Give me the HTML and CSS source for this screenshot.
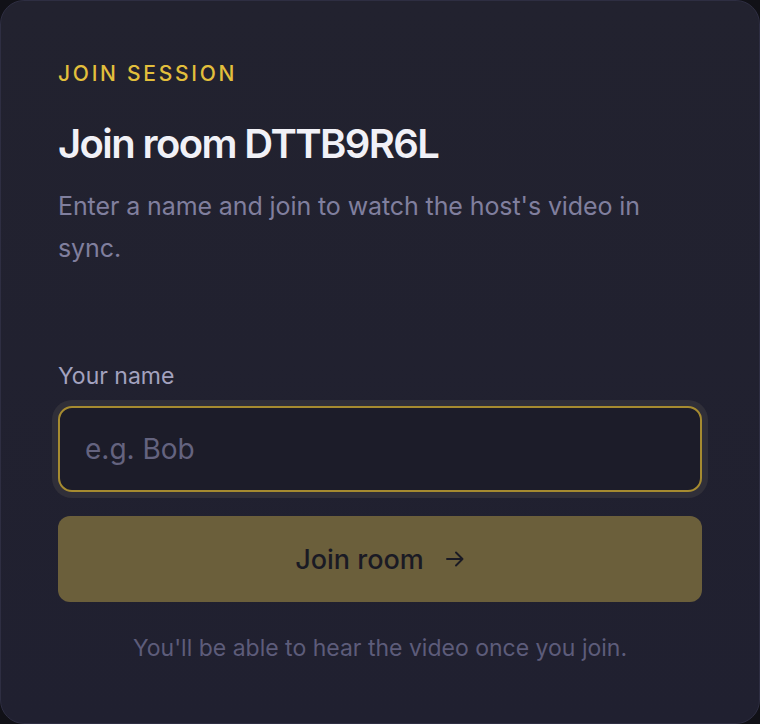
FILE: index.html
```html
<!DOCTYPE html>
<html lang="en">
<head>
<meta charset="utf-8">
<title>Join room</title>
<link rel="stylesheet" href="styles.css">
</head>
<body>
<main class="card">
  <p class="eyebrow">JOIN SESSION</p>
  <h1 class="title">Join room DTTB9R6L</h1>
  <p class="lead">Enter a name and join to watch the host's video in sync.</p>
  <form class="form">
    <label class="label" for="name">Your name</label>
    <div class="field">
      <input class="input" id="name" type="text" placeholder="e.g. Bob">
    </div>
    <button class="btn" type="button" disabled>
      <span>Join room</span>
      <svg class="arrow" viewBox="0 0 20 20" width="20" height="20" aria-hidden="true"><path d="M2 10h15.5M11 3.5l6.5 6.5-6.5 6.5" fill="none" stroke="currentColor" stroke-width="1.9" stroke-linecap="round" stroke-linejoin="round"/></svg>
    </button>
  </form>
  <p class="note">You'll be able to hear the video once you join.</p>
</main>
</body>
</html>
```
FILE: styles.css
```css
* { box-sizing: border-box; }
html, body { margin: 0; padding: 0; }
body {
  background: #111117;
  font-family: Inter, "Noto Sans", sans-serif;
  width: 760px;
  height: 724px;
}
.card {
  width: 760px;
  height: 724px;
  border: 1px solid #2e2e42;
  border-radius: 24px;
  background: linear-gradient(180deg, #22222f 0%, #202030 100%);
  padding: 58px 57px 0 57px;
  display: flex;
  flex-direction: column;
}
.eyebrow {
  margin: 0;
  color: #e2bf3c;
  font-size: 21px;
  font-weight: 500;
  letter-spacing: 0.13em;
  line-height: 30px;
}
.title {
  margin: 29px 0 0;
  color: #f1f1f7;
  font-size: 40px;
  font-weight: 600;
  letter-spacing: -1.6px;
  line-height: 52px;
}
.lead {
  margin: 15px 0 0;
  color: #807f9e;
  font-size: 25px;
  line-height: 42px;
  letter-spacing: -0.1px;
}
.form {
  margin-top: 91px;
  display: flex;
  flex-direction: column;
}
.label {
  color: #a3a2bf;
  font-size: 23px;
  line-height: 32px;
}
.field {
  margin-top: 14px;
}
.input {
  display: block;
  width: 100%;
  height: 86px;
  border: 2px solid #a68b30;
  border-radius: 14px;
  background: #1c1c29;
  box-shadow: 0 0 0 6px #302f39;
  color: #e6e6f0;
  font-family: inherit;
  font-size: 28px;
  padding: 0 25px;
  outline: none;
}
.input::placeholder { color: #64637f; }
.btn {
  margin-top: 24px;
  height: 86px;
  width: 100%;
  border: 0;
  border-radius: 12px;
  background: #6b5f3b;
  color: #1a1a24;
  font-family: inherit;
  font-size: 27px;
  font-weight: 500;
  letter-spacing: 0;
  display: flex;
  align-items: center;
  justify-content: center;
  gap: 21px;
}
.arrow { display: block; }
.note {
  margin: 30px 0 0;
  text-align: center;
  color: #5d5c7a;
  font-size: 23px;
  line-height: 32px;
}
```
